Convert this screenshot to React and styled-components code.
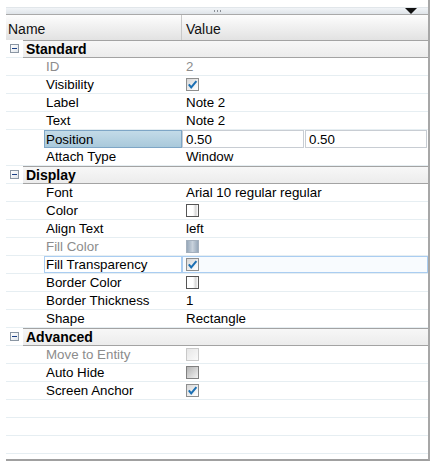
import styled, { createGlobalStyle } from "styled-components";

const GlobalStyle = createGlobalStyle`
  html, body {
    margin: 0;
    padding: 0;
    background: #fff;
  }
  body {
    font-family: "Liberation Sans", Arial, sans-serif;
    font-size: 13.33px;
    color: #000;
  }
`;

const Frame = styled.div`
  width: 434px;
  height: 465px;
  box-sizing: border-box;
  padding-left: 6px;
  background: #fff;
  overflow: hidden;
`;

const Panel = styled.div`
  width: 424px;
  height: 461px;
  box-sizing: border-box;
  border-right: 2px solid #a7a7a7;
  border-bottom: 2px solid #a0a0a0;
  display: flex;
  flex-direction: column;
  overflow: hidden;
  & > * {
    flex: none;
  }
`;

const TopBar = styled.div`
  height: 14px;
  box-sizing: border-box;
  padding-top: 7px;
`;

const Grip = styled.div`
  height: 7px;
  display: grid;
  grid-template-columns: 1fr auto 1fr;
  align-items: center;
  background: linear-gradient(#f1f4f7, #dfe4e9);
  border-top: 1px solid #e1e6ea;
  box-sizing: border-box;
`;

const Dots = styled.div`
  grid-column: 2;
  display: flex;
  gap: 2px;
  span {
    width: 1px;
    height: 2px;
    background: #8a8f96;
  }
`;

const Arrow = styled.div`
  grid-column: 3;
  justify-self: end;
  margin-right: 11px;
  margin-top: -1px;
  width: 0;
  height: 0;
  border-left: 6px solid transparent;
  border-right: 6px solid transparent;
  border-top: 6px solid #111;
`;

const Header = styled.div`
  height: 26px;
  box-sizing: border-box;
  border-top: 1px solid #a9a9a9;
  display: grid;
  grid-template-columns: 176px 1fr;
  background: linear-gradient(#fdfdfd, #e2e2e2);
`;

const HeaderCell = styled.div`
  display: flex;
  align-items: center;
  padding-left: ${(p) => (p.$first ? "2px" : "4px")};
  padding-top: 3px;
  font-size: 14px;
  color: #111;
  border-right: ${(p) => (p.$first ? "1px solid #c9c9c9" : "none")};
`;

const GroupRow = styled.div`
  height: 18px;
  display: grid;
  grid-template-columns: 17px 1fr;
`;

const Toggle = styled.div`
  display: flex;
  align-items: center;
  padding-left: 4px;
  border-bottom: 1px solid #e6eef2;
`;

const ToggleBox = styled.span`
  width: 9px;
  height: 9px;
  box-sizing: border-box;
  border: 1px solid #8a96a3;
  background: linear-gradient(135deg, #ffffff, #e1e6eb);
  display: flex;
  align-items: center;
  justify-content: center;
  &::after {
    content: "";
    width: 5px;
    height: 1px;
    background: #1a3f85;
  }
`;

const GroupBand = styled.div`
  box-sizing: border-box;
  border-top: 1px solid #a3a3a3;
  border-bottom: 1px solid #a3a3a3;
  background: linear-gradient(#f7f7f7, #ececec);
  font-size: 14px;
  font-weight: bold;
  padding-left: 3px;
  display: flex;
  align-items: center;
`;

const PropRow = styled.div`
  height: 18px;
  box-sizing: border-box;
  display: grid;
  grid-template-columns: 38px 138px 1fr;
  border-bottom: ${(p) => (p.$cover ? "none" : "1px solid #e6eef2")};
`;

const Indent = styled.div``;

const NameCell = styled.div`
  box-sizing: border-box;
  display: flex;
  align-items: center;
  padding-left: 2px;
  white-space: nowrap;
  color: ${(p) => (p.$disabled ? "#8c8c8c" : "#000")};
  ${(p) =>
    p.$selected &&
    `
    border: 1px solid #7ea6c6;
    padding-left: 1px;
    background: linear-gradient(#c3dbe8, #a9c9db);
  `}
  ${(p) =>
    p.$hover &&
    `
    border: 1px solid #aacdf1;
    padding-left: 1px;
  `}
`;

const ValueCell = styled.div`
  box-sizing: border-box;
  display: flex;
  align-items: center;
  padding-left: 4px;
  white-space: nowrap;
  color: ${(p) => (p.$disabled ? "#8c8c8c" : "#000")};
  ${(p) =>
    p.$hover &&
    `
    border: 1px solid #aacdf1;
    padding-left: 3px;
    background: #f8fbfe;
  `}
`;

const Pair = styled.div`
  display: flex;
  gap: 1px;
  padding-right: 1px;
`;

const Field = styled.div`
  flex: 1;
  box-sizing: border-box;
  border: 1px solid #c8cdd3;
  display: flex;
  align-items: center;
  padding-left: 3px;
`;

const boxStyles = {
  checked: "border: 1px solid #8e8f8f; background: linear-gradient(135deg, #d6d6d6 0%, #fbfbfb 85%);",
  blank: "border: 1px solid #555; background: linear-gradient(90deg, #fff 55%, #d6d6d6 80%, #fff 100%);",
  filled: "border: 1px solid #a4b0bd; background: linear-gradient(90deg, #97a8ba, #c8d2dc 50%, #97a8ba);",
  disabled: "border: 1px solid #c9c9c9; background: linear-gradient(135deg, #e6e6e6, #fafafa);",
  gray: "border: 1px solid #808080; background: linear-gradient(135deg, #b3b3b3, #f2f2f2);",
};

const Box = styled.span`
  width: 13px;
  height: 13px;
  box-sizing: border-box;
  display: block;
  ${(p) => boxStyles[p.$kind]}
  svg {
    display: block;
  }
`;

const Check = ({ kind }) => (
  <Box $kind={kind}>
    {kind === "checked" && (
      <svg width="11" height="11" viewBox="0 0 11 11">
        <path d="M1.8 5.4 L4.2 8.4 L9.4 2.2" fill="none" stroke="#1b6fb3" strokeWidth="2" />
      </svg>
    )}
  </Box>
);

const groups = [
  {
    title: "Standard",
    rows: [
      { name: "ID", value: "2", disabled: true },
      { name: "Visibility", check: "checked" },
      { name: "Label", value: "Note 2" },
      { name: "Text", value: "Note 2" },
      { name: "Position", pair: ["0.50", "0.50"], selected: true },
      { name: "Attach Type", value: "Window" },
    ],
  },
  {
    title: "Display",
    rows: [
      { name: "Font", value: "Arial 10 regular regular" },
      { name: "Color", check: "blank" },
      { name: "Align Text", value: "left" },
      { name: "Fill Color", check: "filled", disabled: true },
      { name: "Fill Transparency", check: "checked", hover: true },
      { name: "Border Color", check: "blank" },
      { name: "Border Thickness", value: "1" },
      { name: "Shape", value: "Rectangle" },
    ],
  },
  {
    title: "Advanced",
    rows: [
      { name: "Move to Entity", check: "disabled", disabled: true },
      { name: "Auto Hide", check: "gray" },
      { name: "Screen Anchor", check: "checked" },
    ],
  },
];

const Property = ({ row }) => (
  <PropRow $cover={row.pair}>
    <Indent />
    <NameCell $disabled={row.disabled} $selected={row.selected} $hover={row.hover}>
      {row.name}
    </NameCell>
    {row.pair ? (
      <Pair>
        {row.pair.map((v, i) => (
          <Field key={i}>{v}</Field>
        ))}
      </Pair>
    ) : (
      <ValueCell $disabled={row.disabled} $hover={row.hover}>
        {row.check ? <Check kind={row.check} /> : row.value}
      </ValueCell>
    )}
  </PropRow>
);

export default function App() {
  return (
    <>
      <GlobalStyle />
      <Frame>
        <Panel>
          <TopBar>
            <Grip>
              <Dots>
                <span />
                <span />
                <span />
              </Dots>
              <Arrow />
            </Grip>
          </TopBar>
          <Header>
            <HeaderCell $first>Name</HeaderCell>
            <HeaderCell>Value</HeaderCell>
          </Header>
          {groups.map((g) => (
            <div key={g.title}>
              <GroupRow>
                <Toggle>
                  <ToggleBox />
                </Toggle>
                <GroupBand>{g.title}</GroupBand>
              </GroupRow>
              {g.rows.map((r) => (
                <Property key={r.name} row={r} />
              ))}
            </div>
          ))}
          {[0, 1, 2, 3].map((i) => (
            <PropRow key={i} />
          ))}
        </Panel>
      </Frame>
    </>
  );
}
